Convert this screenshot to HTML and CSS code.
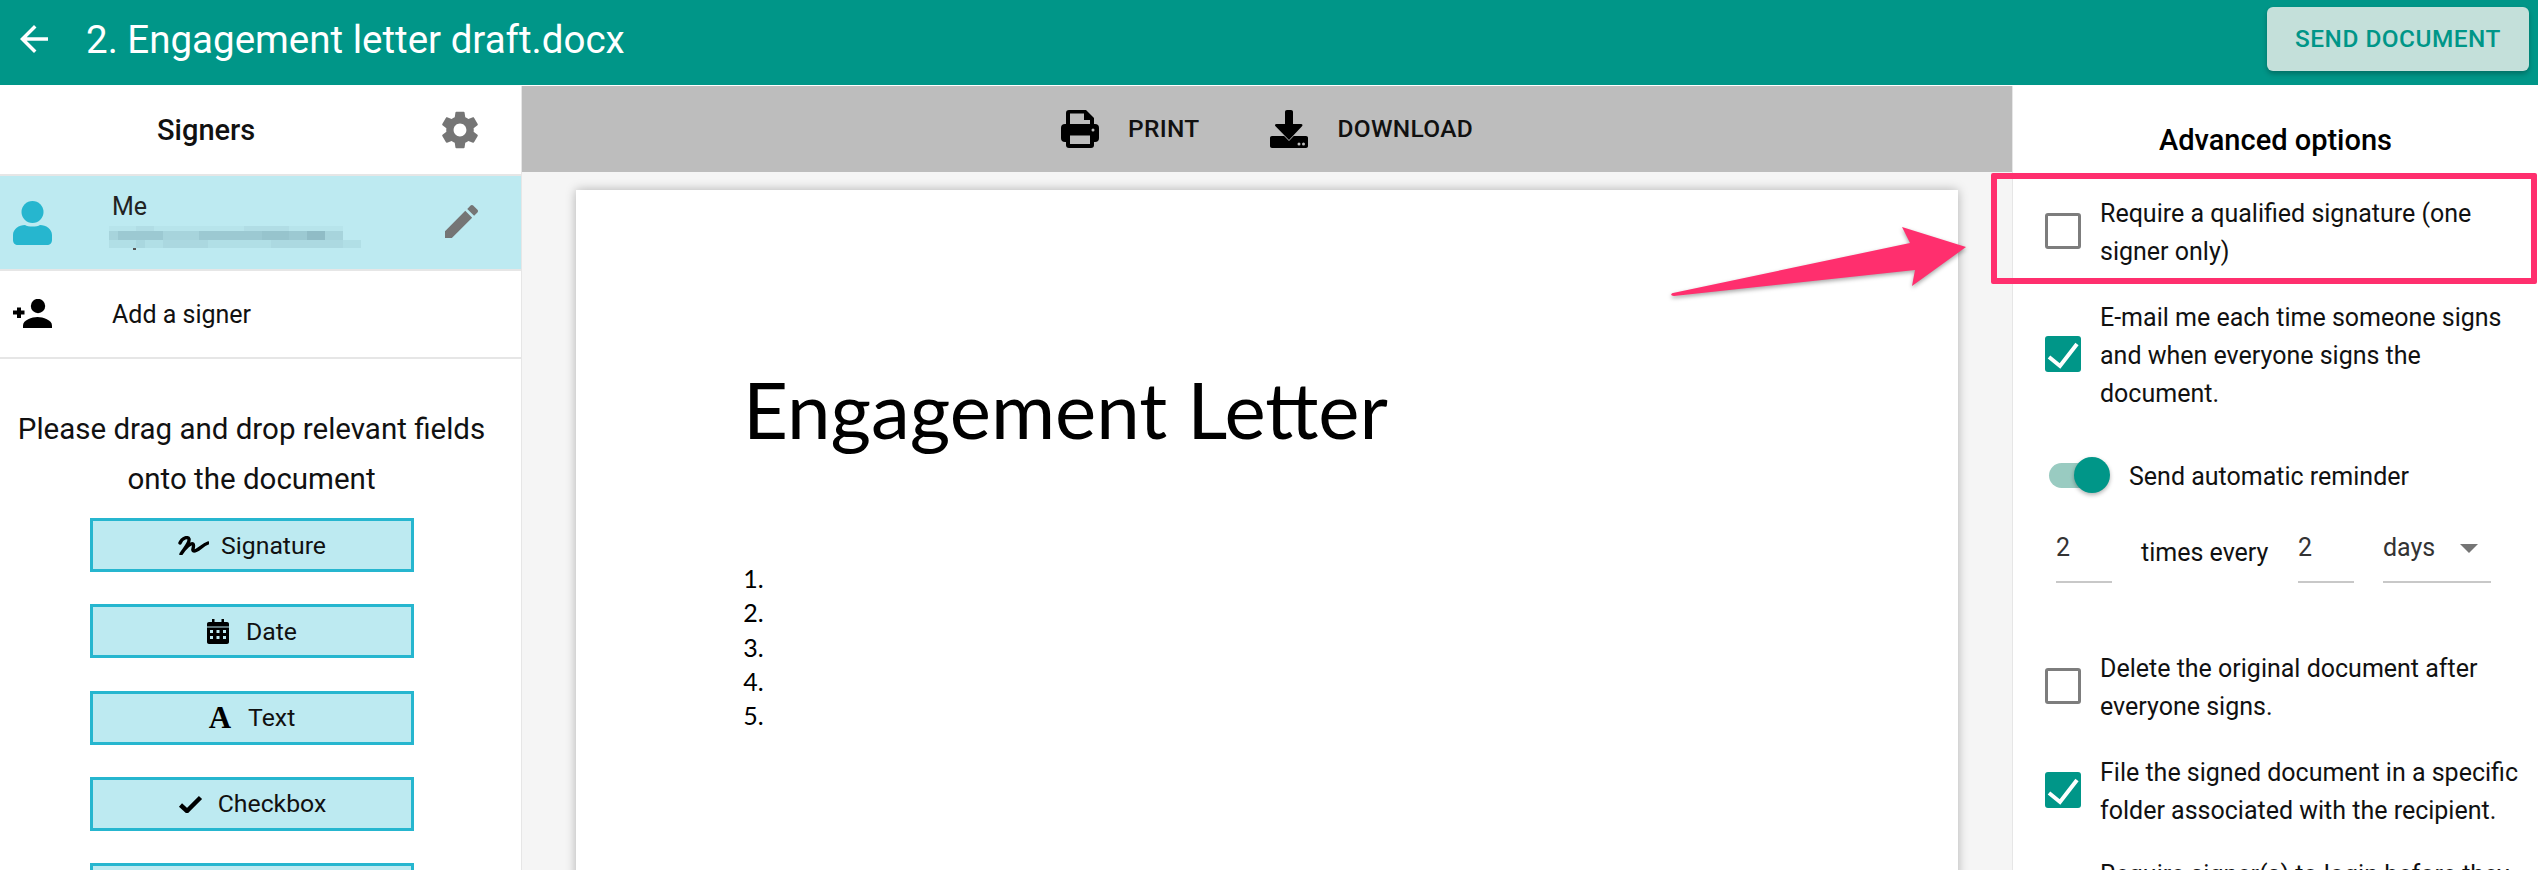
FILE: index.html
```html
<!DOCTYPE html>
<html lang="en">
<head>
<meta charset="utf-8">
<title>Engagement letter</title>
<link rel="stylesheet" href="styles.css">
</head>
<body>
<header class="topbar">
  <svg class="back" viewBox="0 0 24 24"><path d="M20 11H7.830l5.590-5.590L12 4l-8 8 8 8 1.410-1.410L7.830 13H20v-2z"/></svg>
  <h1 class="doc-title">2. Engagement letter draft.docx</h1>
  <button class="send">SEND DOCUMENT</button>
</header>
<div class="workspace">
  <aside class="signers">
    <div class="signers-head">
      <span class="signers-title">Signers</span>
      <svg class="gear" viewBox="0 0 24 24"><path d="M19.43 12.98c.04-.32.07-.64.07-.98s-.03-.66-.07-.98l2.11-1.65c.19-.15.24-.42.12-.64l-2-3.46c-.12-.22-.39-.3-.61-.22l-2.49 1c-.52-.4-1.08-.73-1.69-.98l-.38-2.65C14.46 2.18 14.25 2 14 2h-4c-.25 0-.46.18-.49.42l-.38 2.65c-.61.25-1.17.59-1.69.98l-2.49-1c-.23-.09-.49 0-.61.22l-2 3.46c-.13.22-.07.49.12.64l2.11 1.65c-.04.32-.07.65-.07.98s.03.66.07.98l-2.11 1.65c-.19.15-.24.42-.12.64l2 3.46c.12.22.39.3.61.22l2.49-1c.52.4 1.08.73 1.69.98l.38 2.65c.03.24.24.42.49.42h4c.25 0 .46-.18.49-.42l.38-2.65c.61-.25 1.17-.59 1.69-.98l2.49 1c.23.09.49 0 .61-.22l2-3.46c.12-.22.07-.49-.12-.64l-2.11-1.65zM12 15.5c-1.93 0-3.5-1.57-3.5-3.5s1.57-3.5 3.5-3.5 3.5 1.57 3.5 3.5-1.57 3.5-3.5 3.5z"/></svg>
    </div>
    <div class="signer-row">
      <svg class="person" viewBox="0 0 40 44"><circle cx="19.5" cy="11" r="11"/><path d="M0 39v-5C0 28 6 24 12 24c3 2 12 2 15 0 6 0 12 4 12 10v5c0 3-2 5-5 5H5c-3 0-5-2-5-5z"/></svg>
      <div class="signer-info">
        <div class="signer-name">Me</div>
        <svg class="mosaic" viewBox="0 0 252 26">
          <g fill="#4f7f8a">
            <rect y="0" width="234" height="5" opacity=".05"/>
            <rect x="27" y="0" width="18" height="5" opacity=".06"/>
            <rect x="135" y="0" width="45" height="5" opacity=".06"/>
            <rect y="5" width="234" height="9" opacity=".2"/>
            <rect x="9" y="5" width="27" height="9" opacity=".12"/>
            <rect x="36" y="5" width="18" height="9" opacity=".12"/>
            <rect x="90" y="5" width="126" height="9" opacity=".12"/>
            <rect x="153" y="5" width="27" height="9" opacity=".06"/>
            <rect x="198" y="5" width="18" height="9" opacity=".16"/>
            <rect y="14" width="252" height="8" opacity=".1"/>
            <rect x="27" y="14" width="9" height="8" opacity=".08"/>
            <rect x="54" y="14" width="45" height="8" opacity=".06"/>
            <rect x="162" y="14" width="72" height="8" opacity=".05"/>
          </g>
          <rect x="24" y="22" width="3" height="2" fill="#555"/>
        </svg>
      </div>
      <svg class="pencil" viewBox="3 3 18 18"><path d="M3 17.250V21h3.750L17.810 9.940l-3.750-3.750L3 17.250zM20.710 7.040c.39-.39.39-1.020 0-1.410l-2.340-2.340c-.39-.39-1.020-.39-1.410 0l-1.830 1.830 3.750 3.750 1.830-1.830z"/></svg>
    </div>
    <div class="add-row">
      <svg class="add-icon" viewBox="0 0 40 29"><path d="M5 8.500h4v3h3.500v4H9v3.500H5v-3.500H1v-4h4z"/><circle cx="26" cy="7" r="7.200"/><path d="M11 29v-2.500C11 21 20 18 25.500 18S40 21 40 26.500V29z"/></svg>
      <span class="add-label">Add a signer</span>
    </div>
    <p class="hint">Please drag and drop relevant fields onto the document</p>
    <div class="fields">
      <div class="field">
        <svg class="i-sign" viewBox="0 0 31 19"><path d="M2 7C4 2 10 0 11 3c1 4-5 10-8 15 4-6 10-12 12-10 2 2-2 7 1 7 4 0 8-6 14-8" fill="none" stroke="#000" stroke-width="3.400" stroke-linecap="round" stroke-linejoin="round"/></svg>
        <span>Signature</span>
      </div>
      <div class="field">
        <svg class="i-date" viewBox="0 0 22 25"><path d="M5 0h2.500v3h7V0H17v3h3c1.200 0 2 .8 2 2v18c0 1.200-.8 2-2 2H2c-1.200 0-2-.8-2-2V5c0-1.200.8-2 2-2h3z"/><g fill="#bdeaf1"><rect x="0" y="7.500" width="22" height="1"/><rect x="3" y="11" width="3" height="3"/><rect x="9.500" y="11" width="3" height="3"/><rect x="16" y="11" width="3" height="3"/><rect x="3" y="17" width="3" height="3"/><rect x="9.500" y="17" width="3" height="3"/><rect x="16" y="17" width="3" height="3"/></g></svg>
        <span>Date</span>
      </div>
      <div class="field">
        <span class="i-text">A</span>
        <span>Text</span>
      </div>
      <div class="field">
        <svg class="i-check" viewBox="0 0 25 18"><path d="M2.500 10l6.500 6L22.500 2.500" fill="none" stroke="#000" stroke-width="4.500"/></svg>
        <span>Checkbox</span>
      </div>
      <div class="field"></div>
    </div>
  </aside>
  <main class="viewer">
    <div class="viewer-bar">
      <div class="viewer-action">
        <svg class="bar-icon" viewBox="0 0 38 38"><path d="M8 0h17l8 8v7h-4v-5h-6V3.500H9V15H5V3c0-2 1-3 3-3z"/><rect y="14" width="38" height="18" rx="4"/><rect x="5" y="22" width="28" height="16" rx="3"/><rect x="9" y="25.500" width="20" height="8.500" fill="#bdbdbd"/><circle cx="32" cy="20" r="1.500" fill="#bdbdbd"/></svg>
        <span>PRINT</span>
      </div>
      <div class="viewer-action">
        <svg class="bar-icon" viewBox="0 0 38 38"><path d="M2 26h34c1.200 0 2 .8 2 2v8c0 1.200-.8 2-2 2H2c-1.200 0-2-.8-2-2v-8c0-1.200.8-2 2-2z"/><path d="M15 2c0-1.200.8-2 2-2h4c1.200 0 2 .8 2 2v12h8c1.500 0 2 1.200 1 2.200L19 30 5.500 16.200C4.500 15.200 5 14 6.500 14H15z" stroke="#bdbdbd" stroke-width="1.500" paint-order="stroke"/><circle cx="29" cy="34" r="1.500" fill="#bdbdbd"/><circle cx="33.500" cy="34" r="1.500" fill="#bdbdbd"/></svg>
        <span>DOWNLOAD</span>
      </div>
    </div>
    <div class="pages">
      <article class="paper">
        <h2 class="letter-title">Engagement Letter</h2>
        <ol class="letter-list"><li></li><li></li><li></li><li></li><li></li></ol>
      </article>
    </div>
  </main>
  <aside class="options">
    <h3 class="options-title">Advanced options</h3>
    <div class="opt first">
      <span class="box"></span>
      <span class="opt-text">Require a qualified signature (one<br>signer only)</span>
    </div>
    <div class="opt">
      <span class="box on"><svg viewBox="0 0 36 36"><path d="M4 21l11 9L32 8" fill="none" stroke="#fff" stroke-width="4"/></svg></span>
      <span class="opt-text">E-mail me each time someone signs<br>and when everyone signs the<br>document.</span>
    </div>
    <div class="toggle-row">
      <span class="toggle"><span class="thumb"></span></span>
      <span class="toggle-label">Send automatic reminder</span>
    </div>
    <div class="reminder">
      <span class="input short">2</span>
      <span class="every">times every</span>
      <span class="input short">2</span>
      <span class="input select">days<i class="caret"></i></span>
    </div>
    <div class="opt delete">
      <span class="box"></span>
      <span class="opt-text">Delete the original document after<br>everyone signs.</span>
    </div>
    <div class="opt">
      <span class="box on"><svg viewBox="0 0 36 36"><path d="M4 21l11 9L32 8" fill="none" stroke="#fff" stroke-width="4"/></svg></span>
      <span class="opt-text">File the signed document in a specific<br>folder associated with the recipient.</span>
    </div>
    <div class="opt last">
      <span class="box-space"></span>
      <span class="opt-text">Require signer(s) to login before they</span>
    </div>
  </aside>
</div>
<div class="callout"></div>
<svg class="arrow" viewBox="0 0 300 75"><path d="M3 66L240 16 232 0 296 20 242 59 245 43 4 69C1 69 0 67 3 66Z"/></svg>
</body>
</html>
```
FILE: styles.css
```css
* { box-sizing: border-box; }
html, body { margin: 0; height: 100%; overflow: hidden; }
body {
  width: 2538px;
  height: 870px;
  position: relative;
  font-family: Roboto, "Noto Sans", sans-serif;
  color: #111;
  background: #fff;
  display: flex;
  flex-direction: column;
}

/* top bar */
.topbar {
  height: 85px;
  flex: none;
  background: #009688;
  display: flex;
  align-items: center;
  padding: 0 9px 7px 13px;
  color: #fff;
  margin-bottom: 1px;
}
.back { width: 42px; height: 42px; fill: #fff; flex: none; }
.doc-title { margin: 0 0 0 31px; font-size: 38.500px; font-weight: 400; flex: 1; }
.send {
  width: 262px;
  height: 64px;
  border: 0;
  border-radius: 6px;
  padding: 0 0 2px;
  background: #c4e0da;
  color: #009688;
  font: 500 24.400px Roboto, sans-serif;
  letter-spacing: .5px;
  box-shadow: 0 3px 5px rgba(0,0,0,.25);
}

.workspace { flex: 1; display: flex; min-height: 0; }

/* signers */
.signers {
  width: 522px;
  flex: none;
  border-right: 1px solid #e6e6e6;
}
.signers-head {
  height: 90px;
  border-bottom: 2px solid #e6e6e6;
  display: flex;
  align-items: center;
  position: relative;
}
.signers-title { font-size: 29px; font-weight: 500; margin-left: 157px; }
.gear { width: 44px; height: 44px; fill: #757575; margin-left: 183px; }
.signer-row {
  height: 95px;
  background: #bdeaf1;
  border-bottom: 2px solid #e6e6e6;
  display: flex;
  align-items: center;
  padding-left: 13px;
}
.person { width: 40px; height: 44px; fill: #26b6cf; flex: none; }
.signer-info { margin-left: 56px; width: 252px; margin-top: -3px; }
.signer-name { font-size: 25px; font-weight: 400; line-height: 32px; margin-left: 3px; color: #222; }
.mosaic { display: block; width: 252px; height: 26px; margin-top: 3px; }
.pencil { width: 33px; height: 33px; fill: #757575; margin-left: 84px; margin-top: -2px; }
.add-row {
  height: 88px;
  border-bottom: 2px solid #e6e6e6;
  display: flex;
  align-items: center;
  padding-left: 12px;
}
.add-icon { width: 40px; height: 29px; fill: #000; flex: none; margin-top: -2px; }
.add-label { margin-left: 60px; font-size: 25px; }
.hint {
  margin: 45px 0 0;
  width: 503px;
  padding: 0 4px;
  font-size: 29.500px;
  line-height: 50px;
  text-align: center;
}
.fields {
  display: flex;
  flex-direction: column;
  gap: 32.250px;
  width: 324px;
  margin: 14px 0 0 90px;
}
.field {
  height: 54px;
  flex: none;
  border: 3px solid #26b6cf;
  background: #bdeaf1;
  display: flex;
  align-items: center;
  justify-content: center;
  gap: 12px;
  font-size: 24.800px;
}
.i-sign { width: 31px; height: 19px; }
.i-date { width: 22px; height: 25px; fill: #000; margin-right: 5px; }
.i-text { font: 700 31px "Liberation Serif", serif; color: #000; margin-right: 5px; }
.i-check { width: 25px; height: 18px; margin-right: 3px; }

/* viewer */
.viewer { flex: 1; min-width: 0; background: #f5f5f5; display: flex; flex-direction: column; }
.viewer-bar {
  height: 86px;
  flex: none;
  background: #bdbdbd;
  display: flex;
  justify-content: center;
  gap: 71px;
  align-items: center;
}
.viewer-action { display: flex; align-items: center; gap: 29px; font-size: 24.500px; font-weight: 500; letter-spacing: .3px; }
.viewer-action span { margin-bottom: 2px; }
.bar-icon { width: 38px; height: 38px; fill: #000; }
.pages { flex: 1; padding: 18px 54px 0; overflow: hidden; }
.paper {
  height: 900px;
  background: #fff;
  box-shadow: 0 0 10px rgba(0,0,0,.28);
  padding: 174px 0 0 167px;
}
.letter-title {
  margin: 0;
  font: 400 78px/90px Lato, sans-serif;
  color: #000;
}
.letter-list {
  margin: 107px 0 0;
  padding: 0 0 0 27px;
  font: 400 25px/34.250px Lato, sans-serif;
  color: #000;
}

/* options */
.options {
  width: 526px;
  flex: none;
  border-left: 1px solid #e6e6e6;
  font-size: 25px;
  line-height: 38px;
}
.options-title { margin: 0; height: 107px; padding-top: 35px; text-align: center; font-size: 29px; font-weight: 500; line-height: 38px; color: #000; }
.opt { display: flex; align-items: center; margin-top: 28px; padding-left: 32px; }
.opt.first { margin-top: 0; }
.opt.delete { margin-top: 65px; }
.opt.last { margin-top: 26px; }
.box { width: 36px; height: 36px; flex: none; border: 3px solid #7d7d7d; border-radius: 3px; margin-right: 19px; }
.box.on { background: #009688; border: 0; }
.box svg { display: block; width: 36px; height: 36px; }
.box-space { width: 36px; flex: none; margin-right: 19px; }
.opt-text { white-space: nowrap; margin-top: 2px; margin-bottom: -2px; }
.toggle-row { display: flex; align-items: center; height: 36px; margin-top: 46px; padding-left: 36px; }
.toggle { position: relative; width: 60px; height: 25px; border-radius: 13px; background: #99cbc1; flex: none; }
.thumb { position: absolute; right: -1px; top: -6px; width: 36px; height: 36px; border-radius: 50%; background: #009688; box-shadow: 0 2px 4px rgba(0,0,0,.3); }
.toggle-label { margin-left: 20px; margin-top: 3px; }
.reminder { display: flex; align-items: flex-start; height: 57px; margin-top: 33px; padding-left: 43px; }
.input { height: 57px; border-bottom: 2px solid #c8c8c8; line-height: 43px; color: #333; flex: none; }
.short { width: 56px; }
.every { width: 186px; padding-left: 29px; line-height: 53px; white-space: nowrap; }
.select { width: 108px; margin-left: 29px; position: relative; }
.caret { position: absolute; right: 13px; top: 18px; border: 9px solid transparent; border-top-color: #757575; border-bottom: 0; }

/* annotation overlay */
.callout {
  position: absolute;
  left: 1991px;
  top: 173px;
  width: 546px;
  height: 111px;
  border: 6px solid #ff2f6e;
  border-radius: 2px;
}
.arrow {
  position: absolute;
  left: 1670px;
  top: 227px;
  width: 300px;
  height: 75px;
  fill: #ff2f6e;
  filter: drop-shadow(0 2px 2px rgba(0,0,0,.35));
}
```
